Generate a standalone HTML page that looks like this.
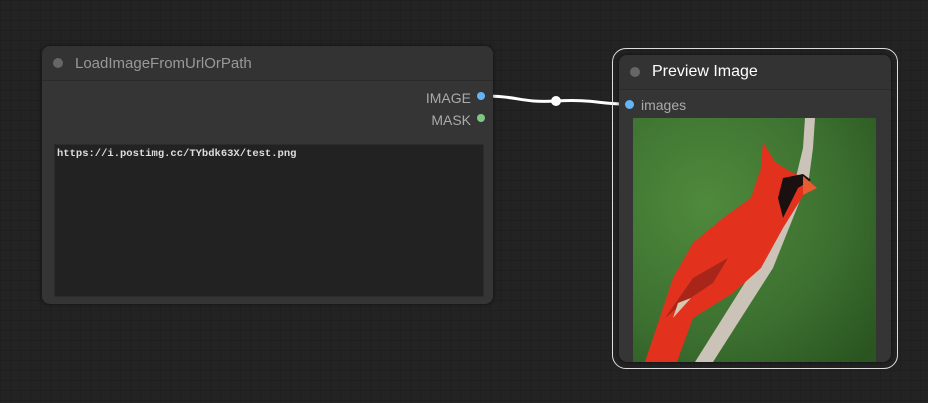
<!DOCTYPE html><html><head><style>
body{margin:0;width:928px;height:403px;overflow:hidden;background-color:#232323;
background-image:linear-gradient(#1f1f1f 1px,transparent 1px),linear-gradient(90deg,#1f1f1f 1px,transparent 1px);background-size:10px 10px;font-family:"Liberation Sans",sans-serif;position:relative}
.n{position:absolute;background:#353535;border-radius:8px;box-shadow:0 0 4px rgba(0,0,0,.6)}
.t{position:absolute;left:0;right:0;top:0;height:34px;background:#333;border-bottom:1px solid #2a2a2a;border-radius:8px 8px 0 0}
.dot{position:absolute;width:10px;height:10px;border-radius:50%}
.lbl{position:absolute;font-size:14px;color:#aaa}
</style></head><body>
<svg style="position:absolute;left:0;top:0" width="928" height="403"><path d="M483 96 C520 96,520 103,556 101 S600 104,625 104" stroke="#fff" stroke-width="3" fill="none"/><circle cx="556" cy="101" r="5" fill="#fff"/></svg>
<div class="n" style="left:42px;top:46px;width:451px;height:258px">
<div class="t"><div class="dot" style="left:11px;top:12px;background:#666"></div><div class="lbl" style="left:33px;top:9px;font-size:15px;color:#999">LoadImageFromUrlOrPath</div></div>
<div class="lbl" style="right:22px;top:44px">IMAGE</div><div class="dot" style="right:8px;top:46px;width:8px;height:8px;background:#64b5f6"></div>
<div class="lbl" style="right:22px;top:66px">MASK</div><div class="dot" style="right:8px;top:68px;width:8px;height:8px;background:#81c784"></div>
<div style="position:absolute;left:12px;top:98px;width:428px;height:151px;background:#222;border:1px solid #2c2c2c"><div style="font-family:'Liberation Mono',monospace;font-size:10.5px;font-weight:bold;color:#ddd;padding:3px 2px">https://i.postimg.cc/TYbdk63X/test.png</div></div>
</div>
<div style="position:absolute;left:612px;top:48px;width:284px;height:319px;border:1.5px solid #ddd;border-radius:14px"></div>
<div class="n" style="left:619px;top:55px;width:272px;height:307px">
<div class="t"><div class="dot" style="left:11px;top:12px;background:#666"></div><div class="lbl" style="left:33px;top:8px;font-size:16px;color:#fff">Preview Image</div></div>
<div class="dot" style="left:6px;top:45px;width:9px;height:9px;background:#64b5f6"></div><div class="lbl" style="left:22px;top:42px">images</div>
<svg style="position:absolute;left:14px;top:63px" width="243" height="244"><defs><radialGradient id="g" cx=".3" cy=".35" r=".9"><stop offset="0" stop-color="#4f8a3c"/><stop offset=".6" stop-color="#3c7030"/><stop offset="1" stop-color="#2a5520"/></radialGradient></defs>
<rect width="243" height="244" fill="url(#g)"/>
<path d="M172 0 L182 0 L180 30 L176 60 L140 150 L80 244 L62 244 L118 155 L164 55 L170 30Z" fill="#cbc3b8"/>
<path d="M130 24 L142 44 L158 54 L172 60 L170 78 L150 110 L128 150 L100 175 L60 200 L44 244 L12 244 L30 190 L40 160 L60 125 L90 100 L118 80 L128 50Z" fill="#e2321e"/>
<path d="M150 60 L170 56 L178 62 L165 70 L150 100 L145 80Z" fill="#1a1010"/>
<path d="M170 58 L184 70 L170 77Z" fill="#e85a30"/>
<path d="M32 200 L60 160 L95 140 L80 165 L50 185Z" fill="#a8251a"/>
<path d="M58 180 L40 200 L45 185Z" fill="#d8c8b0"/>
</svg>
</div>
</body></html>
